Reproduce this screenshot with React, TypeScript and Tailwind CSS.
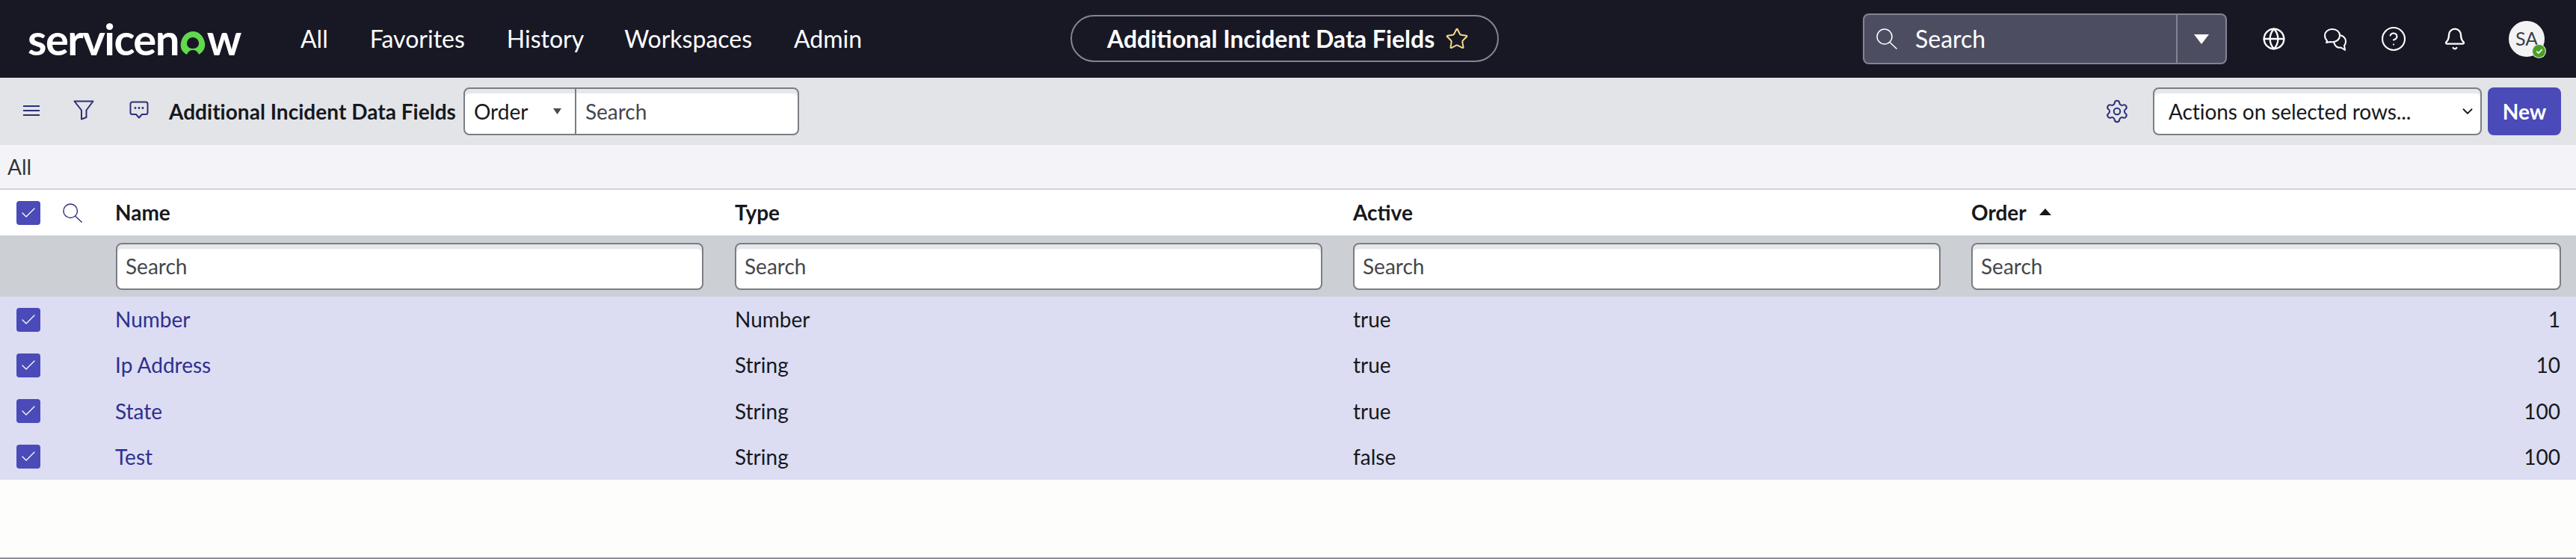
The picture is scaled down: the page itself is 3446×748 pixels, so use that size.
import React from "react";
import { Globe, CircleHelp, Bell, Settings, Star, Check, ChevronDown } from "lucide-react";

const rows = [
  ["Number", "Number", "true", "1"],
  ["Ip Address", "String", "true", "10"],
  ["State", "String", "true", "100"],
  ["Test", "String", "false", "100"],
];

function Box() {
  return (
    <div className="flex h-8 w-8 items-center justify-center rounded-[4px] bg-[#4a4bb8]">
      <Check size={24} strokeWidth={1.25} className="text-white" />
    </div>
  );
}

function Magnifier({ size, className }: { size: number; className: string }) {
  return (
    <svg width={size} height={size} viewBox="0 0 28 28" fill="none" stroke="currentColor" strokeWidth="1.5" className={className}>
      <circle cx="11" cy="11" r="10" />
      <path d="M18 18.5 L27.5 27.5" />
    </svg>
  );
}

function Field({ className }: { className: string }) {
  return (
    <input
      readOnly
      placeholder="Search"
      className={`min-w-0 border-2 border-[#7b7d85] bg-white px-[11px] text-[28px] shadow-[inset_0_6px_0_#e6e7ea] outline-none placeholder:text-[#45474d] ${className}`}
    />
  );
}

export default function App() {
  return (
    <div className="flex h-[748px] w-[3446px] flex-col overflow-hidden bg-white font-['Lato','Liberation_Sans',sans-serif] text-[28px] text-[#17181c]">
      <header className="flex h-[104px] shrink-0 items-center bg-[#181825] text-white">
        <div className="ml-[37px] flex w-[300px] items-baseline text-[58px] font-bold leading-none tracking-[-1.6px]">
          <span>servicen</span>
          <svg width="36" height="36" viewBox="0 0 36 36" className="mx-[1px] self-end mb-[5px] shrink-0" fill="none">
            <path d="M10 33 C2 29 1 22 2 17 C4 7 11 2 18 2 C26 2 32 8 34 17 C35 23 33 29 26 33 C24 28 21 27 18 27 C15 27 12 28 10 33 Z M18 10 C13 10 10 14 10 18 C10 22 13 25 18 25 C23 25 26 22 26 18 C26 14 23 10 18 10 Z" fill="#62d84e" fillRule="evenodd" />
          </svg>
          <span>w</span>
        </div>
        <nav className="ml-[65px] flex items-center text-[32px]">
          <span>All</span>
          <span className="ml-[56px]">Favorites</span>
          <span className="ml-[56px]">History</span>
          <span className="ml-[54px]">Workspaces</span>
          <span className="ml-[56px]">Admin</span>
        </nav>
        <div className="absolute left-[1432px] top-[20px] flex h-[63px] w-[573px] items-center rounded-full border-2 border-[#85858f] pl-[47px]">
          <span className="text-[32px] font-bold">Additional Incident Data Fields</span>
          <Star size={32} strokeWidth={1.5} className="ml-[14px] text-[#f2d98a]" />
        </div>
        <div className="ml-auto flex h-[68px] w-[487px] items-stretch rounded-[8px] border-2 border-[#84848f] bg-[#4d4d62]">
          <div className="flex flex-1 items-center pl-[16px]">
            <Magnifier size={28} className="shrink-0" />
            <span className="ml-[24px] text-[32px]">Search</span>
          </div>
          <div className="flex w-[66px] items-center justify-center border-l-2 border-[#84848f]">
            <svg width="20" height="13" viewBox="0 0 20 13"><path d="M0 0 H20 L10 13 Z" fill="#fff" /></svg>
          </div>
        </div>
        <div className="ml-[47px] flex items-center">
          <Globe size={32} strokeWidth={1.75} />
          <svg width="32" height="32" viewBox="0 0 32 32" fill="none" stroke="currentColor" strokeWidth="2" strokeLinejoin="round" className="ml-[50px]">
            <path d="M12 3 C6 3 2 7 2 11.5 C2 14.5 3.5 17 5 18.5 L4 21 L9 20 C10.5 20.5 12 20.5 14 20 C19 19 22 15.5 22 11 C22 7 18 3 12 3 Z" />
            <path d="M22 11 C26.5 12 30 15 30 19.5 C30 22 29 24 28 25 L29 31 L23.5 27.5 C19 28.5 15 26 14 20" />
          </svg>
          <CircleHelp size={36} strokeWidth={1.4} className="ml-[44px]" />
          <Bell size={32} strokeWidth={1.75} className="ml-[48px]" />
          <div className="relative ml-[56px] mr-[42px] flex h-[48px] w-[48px] items-center justify-center rounded-full bg-[#f3f3f6] text-[25px] text-[#3c3c48]">
            SA
            <div className="absolute -bottom-[1px] -right-[1px] flex h-[17px] w-[17px] items-center justify-center rounded-full bg-[#4aa025] ring-1 ring-[#e6e6e6]">
              <Check size={10} strokeWidth={4} className="text-white" />
            </div>
          </div>
        </div>
      </header>

      <div className="flex h-[90px] shrink-0 items-center bg-[#e2e4e8] pb-[1px]">
        <svg width="22" height="14" viewBox="0 0 22 14" className="ml-[31px] mt-[-2px] text-[#2e2e78]" fill="none" stroke="currentColor" strokeWidth="2">
          <path d="M0 1 H22 M0 7 H22 M0 13 H22" />
        </svg>
        <svg width="28" height="27" viewBox="0 0 28 27" className="ml-[45px] mt-[-3px] text-[#2e2e78]" fill="none" stroke="currentColor" strokeWidth="2" strokeLinejoin="round">
          <path d="M1.5 1.5 H26.5 L17.5 13.5 V23 L11 25.5 V13.5 Z" />
        </svg>
        <svg width="26" height="24" viewBox="0 0 26 24" className="ml-[47px] mt-[-4px] text-[#2e2e78]" fill="none" stroke="currentColor" strokeWidth="2" strokeLinejoin="round">
          <path d="M4 1.5 H22 A2.5 2.5 0 0 1 24.5 4 V15.5 A2.5 2.5 0 0 1 22 18 H17 L13 22.5 L9 18 H4 A2.5 2.5 0 0 1 1.5 15.5 V4 A2.5 2.5 0 0 1 4 1.5 Z" />
          <circle cx="8" cy="9.5" r="1.4" fill="currentColor" stroke="none" />
          <circle cx="13" cy="9.5" r="1.4" fill="currentColor" stroke="none" />
          <circle cx="18" cy="9.5" r="1.4" fill="currentColor" stroke="none" />
        </svg>
        <span className="ml-[27px] font-bold tracking-[0.03px]">Additional Incident Data Fields</span>
        <div className="ml-[10px] flex h-16 w-[449px] items-stretch overflow-hidden rounded-[8px] border-2 border-[#7b7d85] bg-white shadow-[inset_0_6px_0_#e6e7ea]">
          <div className="flex w-[149px] items-center justify-between border-r-2 border-[#7b7d85] pl-[12px] pr-[18px]">
            <span>Order</span>
            <svg width="11" height="8" viewBox="0 0 11 8"><path d="M0 0 H11 L5.5 8 Z" fill="#4a4a55" /></svg>
          </div>
          <input readOnly placeholder="Search" className="min-w-0 flex-1 bg-transparent px-[12px] text-[28px] outline-none placeholder:text-[#45474d]" />
        </div>
        <Settings size={34} strokeWidth={1.4} className="ml-auto text-[#2e2e78]" />
        <div className="ml-[31px] flex h-16 w-[440px] items-center justify-between rounded-[8px] border-2 border-[#7b7d85] bg-white pl-[19px] pr-[6px] pt-[1px] shadow-[inset_0_6px_0_#e6e7ea]">
          <span className="tracking-[-0.08px]">Actions on selected rows...</span>
          <ChevronDown size={22} strokeWidth={2} />
        </div>
        <button className="ml-[8px] mr-[20px] h-16 w-[98px] rounded-[8px] bg-[#4a4bb8] font-bold text-white">New</button>
      </div>

      <div className="flex h-[58px] shrink-0 items-center bg-[#f4f4f8] pl-[10px] text-[#33353a]">All</div>
      <div className="h-[2px] shrink-0 bg-[#d2d3d8]" />

      <div className="grid h-[61px] shrink-0 grid-cols-[155px_828px_827px_827px_1fr] items-center bg-white font-bold">
        <div className="flex items-center pl-[22px]">
          <Box />
          <Magnifier size={26} className="ml-[30px] text-[#2e2e78]" />
        </div>
        <span className="-ml-[1px] pb-[2px]">Name</span>
        <span className="pb-[2px]">Type</span>
        <span className="pb-[2px]">Active</span>
        <span className="flex items-center gap-[17px] pb-[2px]">
          Order
          <svg width="16" height="9" viewBox="0 0 16 9"><path d="M8 0 L16 9 H0 Z" fill="#17181c" /></svg>
        </span>
      </div>

      <div className="grid h-[82px] shrink-0 grid-cols-[155px_828px_827px_827px_1fr] items-center bg-[#ccd0d5]">
        <div />
        {[0, 1, 2, 3].map((i) => (
          <Field key={i} className={`h-[63px] rounded-[8px] ${i === 3 ? "mr-[20px]" : i === 0 ? "mr-[42px]" : "mr-[41px]"}`} />
        ))}
      </div>

      <div className="shrink-0 bg-[#dcddf2]">
        {rows.map((r) => (
          <div key={r[0]} className="grid h-[61.25px] grid-cols-[155px_828px_827px_827px_1fr] items-center">
            <div className="pl-[22px]"><Box /></div>
            <span className="-ml-[1px] pb-[1px] text-[#2f2f8f]">{r[0]}</span>
            <span className="pb-[1px]">{r[1]}</span>
            <span className="pb-[1px]">{r[2]}</span>
            <span className="pb-[1px] pr-[21px] text-right">{r[3]}</span>
          </div>
        ))}
      </div>

      <div className="flex-1 bg-[#fdfdfc]" />
      <div className="h-[2px] shrink-0 bg-[#8c8e96]" />
    </div>
  );
}
